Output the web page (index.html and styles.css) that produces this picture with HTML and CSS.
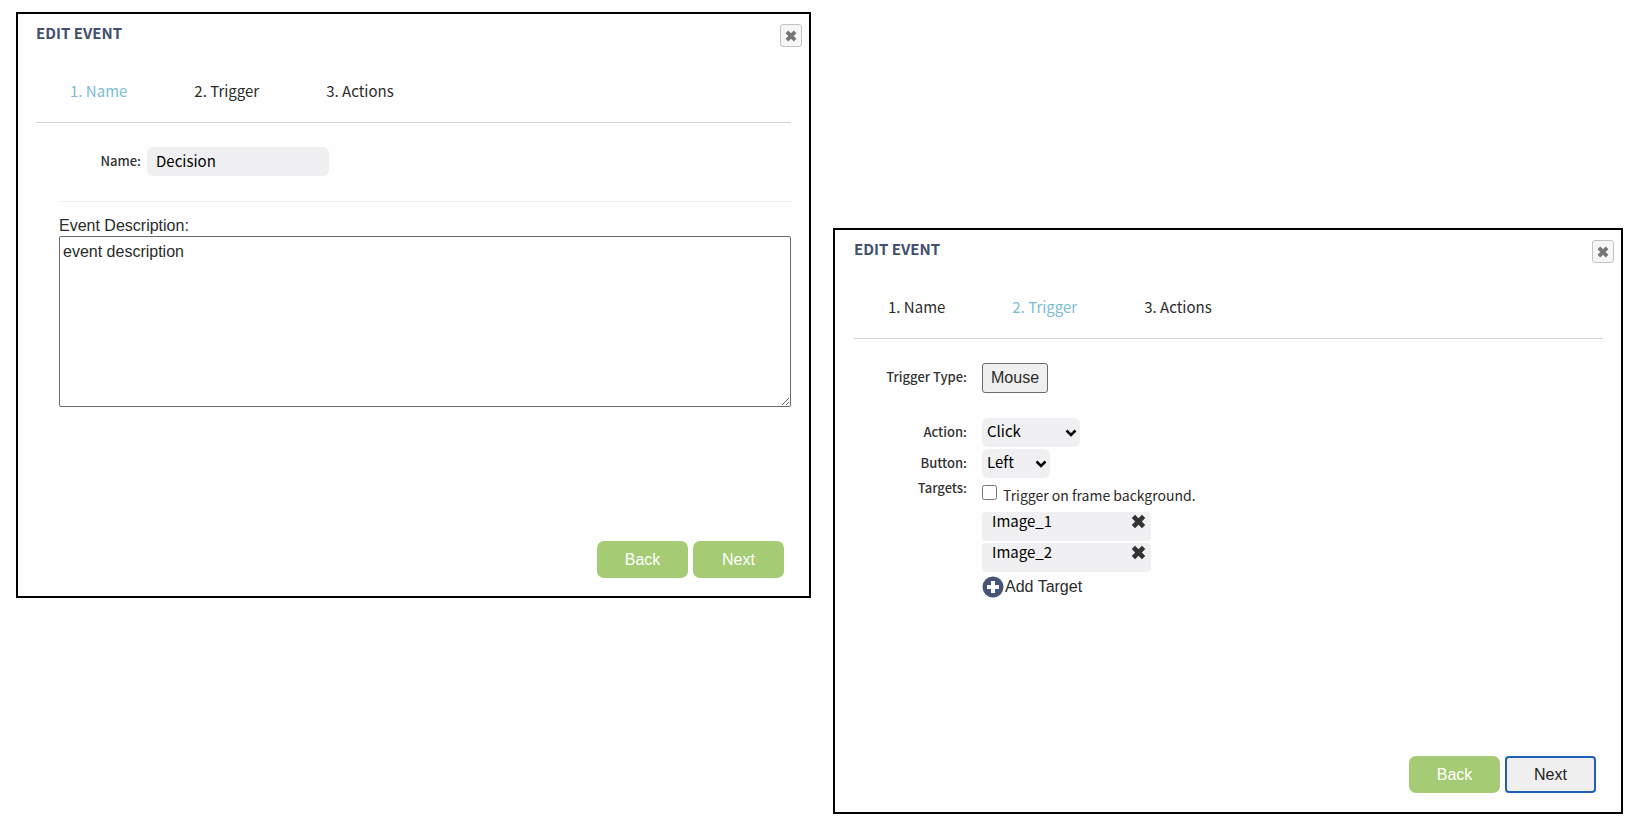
FILE: index.html
```
<!DOCTYPE html>
<html lang="en">
<head>
    <meta charset="UTF-8" />
    <meta name="viewport" content="width=device-width, initial-scale=1.0" />
    <title>Edit Event</title>
    <link rel="stylesheet" href="styles.css">
</head>
<body>
    <svg class="sprite" aria-hidden="true">
        <symbol id="cross" viewBox="0 0 14 14">
            <path d="M3.800 .7 7 3.900 10.200 .7 13.300 3.800 10.100 7l3.200 3.200-3.100 3.100L7 10.100l-3.200 3.200L.7 10.200 3.900 7 .7 3.800z" />
        </symbol>
        <symbol id="chevron" viewBox="0 0 12 8">
            <path d="M1.500 1.500 6 6l4.500-4.500" fill="none" stroke="#000" stroke-width="2.500" />
        </symbol>
    </svg>

    <main class="dialogs">
        <!-- Step 1: name -->
        <section class="dialog">
            <button class="close" aria-label="Close"><svg class="close-icon"><use href="#cross" /></svg></button>
            <h2>EDIT EVENT</h2>
            <nav class="tabs">
                <a class="active" href="#name">1. Name</a>
                <a href="#trigger">2. Trigger</a>
                <a href="#actions">3. Actions</a>
            </nav>
            <div class="name-row">
                <label class="field-label" for="eventName">Name:</label>
                <input class="name-input" type="text" id="eventName" value="Decision" />
            </div>
            <div class="description">
                <label for="eventDescription">Event Description:</label>
                <textarea id="eventDescription">event description</textarea>
            </div>
            <div class="buttons">
                <button class="btn">Back</button>
                <button class="btn">Next</button>
            </div>
        </section>

        <!-- Step 2: trigger -->
        <section class="dialog dialog-trigger">
            <button class="close" aria-label="Close"><svg class="close-icon"><use href="#cross" /></svg></button>
            <h2>EDIT EVENT</h2>
            <nav class="tabs">
                <a href="#name">1. Name</a>
                <a class="active" href="#trigger">2. Trigger</a>
                <a href="#actions">3. Actions</a>
            </nav>
            <div class="trigger-form">
                <label class="field-label" for="triggerType">Trigger Type:</label>
                <button class="type-btn" id="triggerType">Mouse</button>

                <label class="field-label action-row" for="action">Action:</label>
                <div class="select action-row">
                    <select class="action-select" id="action"><option>Click</option></select>
                    <svg class="arrow"><use href="#chevron" /></svg>
                </div>

                <label class="field-label" for="mouseButton">Button:</label>
                <div class="select">
                    <select class="button-select" id="mouseButton"><option>Left</option></select>
                    <svg class="arrow"><use href="#chevron" /></svg>
                </div>

                <span class="field-label targets-label">Targets:</span>
                <div class="targets">
                    <div class="check">
                        <input type="checkbox" id="frameBackground" />
                        <label for="frameBackground">Trigger on frame background.</label>
                    </div>
                    <div class="target">Image_1 <button class="remove" aria-label="Remove Image_1"><svg class="remove-icon"><use href="#cross" /></svg></button></div>
                    <div class="target">Image_2 <button class="remove" aria-label="Remove Image_2"><svg class="remove-icon"><use href="#cross" /></svg></button></div>
                    <button class="add-target">
                        <svg class="plus" viewBox="0 0 22 22">
                            <circle cx="11" cy="11" r="10.500" fill="#455573" />
                            <path d="M11 5v12M5 11h12" stroke="#fff" stroke-width="4" />
                        </svg>Add Target
                    </button>
                </div>
            </div>
            <div class="buttons">
                <button class="btn">Back</button>
                <button class="btn focused">Next</button>
            </div>
        </section>
    </main>
</body>
</html>
```
FILE: styles.css
```
* {
    box-sizing: border-box;
}

body {
    margin: 0;
    padding: 12px 19px 16px 16px;
    background: #fff;
    color: #2b2b2b;
    font-family: "Liberation Sans", Arial, sans-serif;
    font-size: 16px;
    line-height: 20px;
}

button, input, select, textarea {
    margin: 0;
    font: inherit;
    color: inherit;
}

.sprite {
    display: none;
}

.dialogs {
    display: grid;
    grid-template-columns: 795fr 790fr;
    gap: 22px;
    align-items: start;
}

.dialog {
    position: relative;
    display: flex;
    flex-direction: column;
    min-height: 586px;
    padding: 10px 18px 18px;
    border: 2px solid #000;
    background: #fefefe;
}

.dialog-trigger {
    margin-top: 216px;
    padding-bottom: 19px;
    padding-left: 19px;
}

h2, .tabs, .field-label, .name-input, .select select, .check, .target {
    font-family: "Noto Sans CJK SC", sans-serif;
    font-size: 15px;
}

h2 {
    margin: 0;
    color: #42506e;
    line-height: 18px;
}

.close {
    position: absolute;
    top: 10px;
    right: 7px;
    display: grid;
    place-items: center;
    width: 22px;
    height: 23px;
    padding: 0;
    border: 1px solid #c4c4c4;
    border-radius: 3px;
    background: #f6f6f6;
}

.close-icon {
    width: 12px;
    height: 12px;
    fill: #757575;
}

/* Wizard steps */
.tabs {
    display: flex;
    gap: 67px;
    padding: 39px 34px 21px;
    border-bottom: 1px solid #d2d2d2;
}

.tabs a {
    color: #2b2b2b;
    text-decoration: none;
}

.tabs .active {
    color: #7dbdd3;
}

.field-label {
    padding-bottom: 2px;
    color: #333;
    font-size: 13px;
    font-weight: 500;
    line-height: 16px;
    text-align: right;
}

.name-row {
    display: flex;
    align-items: center;
    gap: 6px;
    margin-left: 24px;
    padding: 24px 0 25px;
    border-bottom: 1px solid #eee;
}

.name-row .field-label {
    width: 81px;
}

.name-input {
    width: 182px;
    height: 29px;
    padding: 0 9px 3px;
    border: 0;
    border-radius: 6px;
    background: #f0f0f2;
    color: #000;
}

.description {
    display: flex;
    flex-direction: column;
    margin: 14px 0 0 23px;
}

textarea {
    height: 171px;
    padding: 5px 3px;
    border: 1px solid #6b6b6b;
    border-radius: 2px;
    background: #fff;
}

/* Trigger form */
.trigger-form {
    display: grid;
    grid-template-columns: 113px 1fr;
    column-gap: 15px;
    row-gap: 2px;
    align-items: center;
    justify-items: start;
    padding-top: 24px;
}

.trigger-form .field-label {
    justify-self: end;
}

.type-btn {
    height: 30px;
    padding: 0 8px;
    border: 1px solid #6b6b6b;
    border-radius: 3px;
    background: #efefef;
}

.action-row {
    margin-top: 23px;
}

.select {
    display: grid;
    align-items: center;
}

.select select {
    grid-area: 1 / 1;
    height: 29px;
    padding: 0 5px 4px;
    border: 0;
    border-radius: 6px;
    background: #f0f0f2;
    color: #000;
    appearance: none;
}

.action-select {
    width: 98px;
}

.button-select {
    width: 68px;
}

.arrow {
    grid-area: 1 / 1;
    justify-self: end;
    width: 12px;
    height: 8px;
    margin-right: 3px;
    pointer-events: none;
}

.trigger-form .targets-label {
    align-self: start;
}

.targets {
    display: flex;
    flex-direction: column;
    align-items: flex-start;
    gap: 2px;
}

.targets .check {
    display: flex;
    align-items: flex-start;
    gap: 6px;
    padding: 5px 0 5px;
    font-size: 14px;
}

.check input {
    width: 15px;
    height: 15px;
}

.target {
    display: flex;
    justify-content: space-between;
    align-items: flex-start;
    width: 169px;
    height: 29px;
    padding: 0 5px 0 10px;
    border-radius: 4px;
    background: #f0f0f2;
    color: #000;
    line-height: 17px;
}

.remove {
    display: flex;
    padding: 2px 0;
    border: 0;
    background: none;
}

.remove-icon {
    width: 15px;
    height: 15px;
    fill: #333;
}

.add-target {
    display: flex;
    align-items: center;
    padding: 2px 0 0;
    border: 0;
    background: none;
}

.plus {
    width: 22px;
    height: 22px;
    margin-right: 1px;
}

.buttons {
    display: flex;
    justify-content: flex-end;
    gap: 5px;
    margin-top: auto;
    padding-right: 7px;
}

.btn {
    width: 91px;
    height: 37px;
    padding: 0;
    border: 0;
    border-radius: 7px;
    background: #a5cb74;
    color: #fff;
}

.focused {
    border: 2px solid #1f5fb8;
    border-radius: 4px;
    background: #efefef;
    color: #222;
}
```
